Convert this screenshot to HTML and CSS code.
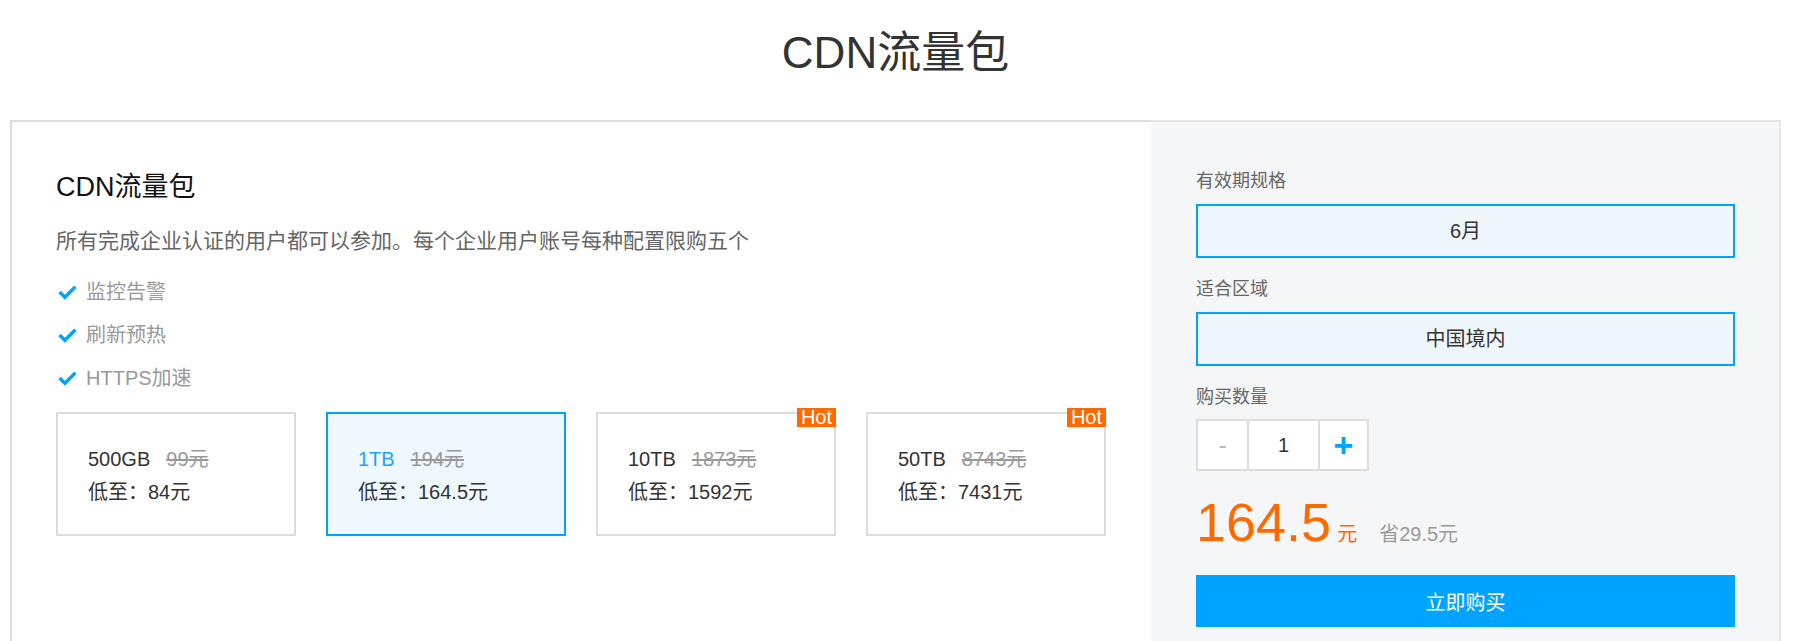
FILE: index.html
```html
<!DOCTYPE html>
<html lang="zh-CN">
<head>
  <meta charset="UTF-8" />
  <meta name="viewport" content="width=device-width, initial-scale=1.0" />
  <title>CDN流量包</title>
  <link rel="stylesheet" href="styles.css">
</head>
<body>
  <div class="page">
    <h1 class="page-title">CDN流量包</h1>

    <div class="pkg">
      <div class="pkg-info">
        <h2 class="pkg-name">CDN流量包</h2>
        <p class="pkg-desc">所有完成企业认证的用户都可以参加。每个企业用户账号每种配置限购五个</p>
        <ul class="features">
          <li><svg class="check" viewBox="0 0 18 14"><polyline points="1.5,6.5 6.5,11.5 16.5,1.5" /></svg>监控告警</li>
          <li><svg class="check" viewBox="0 0 18 14"><polyline points="1.5,6.5 6.5,11.5 16.5,1.5" /></svg>刷新预热</li>
          <li><svg class="check" viewBox="0 0 18 14"><polyline points="1.5,6.5 6.5,11.5 16.5,1.5" /></svg>HTTPS加速</li>
        </ul>

        <div class="plans">
          <div class="plan">
            <div><span class="plan-size">500GB</span><del>99元</del></div>
            <div>低至：84元</div>
          </div>
          <div class="plan active">
            <div><span class="plan-size">1TB</span><del>194元</del></div>
            <div>低至：164.5元</div>
          </div>
          <div class="plan">
            <span class="hot">Hot</span>
            <div><span class="plan-size">10TB</span><del>1873元</del></div>
            <div>低至：1592元</div>
          </div>
          <div class="plan">
            <span class="hot">Hot</span>
            <div><span class="plan-size">50TB</span><del>8743元</del></div>
            <div>低至：7431元</div>
          </div>
        </div>
      </div>

      <div class="pkg-order">
        <div class="field-label">有效期规格</div>
        <div class="option">6月</div>

        <div class="field-label">适合区域</div>
        <div class="option">中国境内</div>

        <div class="field-label">购买数量</div>
        <div class="stepper">
          <button class="step minus">-</button>
          <span class="qty">1</span>
          <button class="step plus">+</button>
        </div>

        <div class="total">
          <span class="amount">164.5</span>
          <span class="unit">元</span>
          <span class="save">省29.5元</span>
        </div>

        <button class="buy">立即购买</button>
      </div>
    </div>
  </div>
</body>
</html>
```

FILE: styles.css
```css
html, body {
  overflow: hidden;
}
body {
  margin: 0;
  font-family: "Liberation Sans", "Noto Sans CJK SC", sans-serif;
  color: #333;
  background-color: #fff;
}
.page {
  width: 1771px;
  margin-left: 10px;
}
.page-title {
  margin: 23px 0 37px;
  font-size: 44px;
  line-height: 60px;
  font-weight: normal;
  text-align: center;
  color: #333;
}
.pkg {
  display: grid;
  grid-template-columns: 1141px 630px;
  height: 521px;
}
.pkg-info {
  border-top: 2px solid #ddd;
  border-left: 2px solid #ddd;
  padding: 47px 45px 0 44px;
}
.pkg-name {
  margin: 0;
  font-size: 27px;
  line-height: 36px;
  font-weight: normal;
  color: #111;
}
.pkg-desc {
  margin: 21px 0 0;
  font-size: 21px;
  line-height: 30px;
  color: #666;
}
.features {
  list-style: none;
  margin: 15px 0 0;
  padding: 0;
}
.features li {
  display: flex;
  align-items: center;
  font-size: 20px;
  line-height: 43px;
  color: #999;
}
.check {
  width: 19px;
  height: 15px;
  margin: 0 9px 0 2px;
  fill: none;
  stroke: #00a4ff;
  stroke-width: 3.2;
}
.plans {
  display: grid;
  grid-template-columns: repeat(4, 1fr);
  gap: 30px;
  margin-top: 12px;
}
.plan {
  position: relative;
  border: 2px solid #ddd;
  padding: 29px 30px 25px 30px;
  font-size: 20px;
  line-height: 33px;
  color: #333;
}
.plan del {
  margin-left: 16px;
  color: #999;
}
.plan.active {
  border-color: #00a4ff;
  background-color: #eef8fe;
}
.plan.active .plan-size {
  color: #1ea1ff;
}
.hot {
  position: absolute;
  top: -6px;
  right: -2px;
  padding: 0 4px;
  background-color: #ff6a00;
  color: #fff;
  font-size: 20px;
  line-height: 19px;
}
.pkg-order {
  background-color: #f5f6f8;
  border-top: 2px solid #e4e5e7;
  border-right: 2px solid #e4e5e7;
  padding: 46px 44px 0 45px;
}
.field-label {
  font-size: 18px;
  line-height: 26px;
  color: #666;
  margin-top: 18px;
}
.field-label:first-child {
  margin-top: 0;
}
.option {
  margin-top: 10px;
  height: 54px;
  box-sizing: border-box;
  border: 2px solid #00a4ff;
  background-color: #eff7fd;
  font-size: 20px;
  line-height: 50px;
  text-align: center;
  color: #333;
}
.stepper {
  display: flex;
  width: 173px;
  height: 52px;
  margin-top: 9px;
  box-sizing: border-box;
  border: 2px solid #ddd;
  background-color: #fff;
}
.step {
  width: 49px;
  border: none;
  padding: 0;
  background-color: #fff;
  font-family: "Liberation Sans", sans-serif;
  cursor: pointer;
}
.minus {
  font-size: 26px;
  color: #bbb;
}
.plus {
  width: 47px;
  font-size: 34px;
  font-weight: bold;
  color: #00a4ff;
}
.qty {
  width: 69px;
  border-left: 2px solid #ddd;
  border-right: 2px solid #ddd;
  font-size: 20px;
  line-height: 48px;
  text-align: center;
  color: #333;
}
.total {
  display: flex;
  align-items: baseline;
  margin-top: 21px;
  line-height: 60px;
}
.amount {
  font-size: 54px;
  color: #ff6a00;
}
.unit {
  margin-left: 6px;
  font-size: 20px;
  color: #ff6a00;
}
.save {
  margin-left: 22px;
  font-size: 20px;
  color: #999;
}
.buy {
  display: block;
  width: 100%;
  height: 52px;
  margin-top: 11px;
  border: none;
  background-color: #00a4ff;
  color: #fff;
  font-family: "Liberation Sans", "Noto Sans CJK SC", sans-serif;
  font-size: 20px;
  cursor: pointer;
}
```
